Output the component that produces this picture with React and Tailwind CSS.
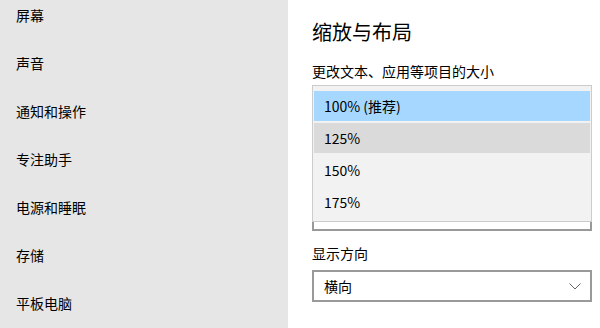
const navItems = ['屏幕', '声音', '通知和操作', '专注助手', '电源和睡眠', '存储', '平板电脑'];
const scaleOptions = ['100% (推荐)', '125%', '150%', '175%'];

function App() {
  return (
    <div
      className="flex w-[600px] h-[328px] overflow-hidden bg-white text-black"
      style={{ fontFamily: '"Noto Sans CJK SC", "Noto Sans", sans-serif' }}
    >
      {/* Sidebar */}
      <nav className="w-[288px] shrink-0 bg-[#e6e6e6]">
        <ul className="-mt-[9px] flex flex-col">
          {navItems.map((item) => (
            <li key={item} className="h-12 flex items-center pl-4 text-[14px] leading-5">
              {item}
            </li>
          ))}
        </ul>
      </nav>

      {/* Content */}
      <main className="flex-1 pl-6 pr-2 pt-[18px]">
        <h1 className="text-[20px] leading-7 font-normal">缩放与布局</h1>
        <p className="mt-[15px] text-[14px] leading-5">更改文本、应用等项目的大小</p>

        <div className="relative mt-[4px] h-[146px] w-[280px] flex flex-col justify-end">
          {/* underlying combobox */}
          <div className="h-8 border-2 border-[#999999]" />

          {/* open dropdown list */}
          <ul className="absolute top-0 left-0 w-full h-[137px] bg-[#f2f2f2] border border-[#cccccc] pt-[5px] px-px flex flex-col gap-[2px]">
            {scaleOptions.map((opt, i) => (
              <li
                key={opt}
                className={`h-[30px] shrink-0 flex items-center px-[10px] text-[14px] leading-5 ${
                  i === 0 ? 'bg-[#a6d8ff]' : i === 1 ? 'bg-[#dadada]' : ''
                }`}
              >
                {opt}
              </li>
            ))}
          </ul>
        </div>

        <p className="mt-[12px] text-[14px] leading-5">显示方向</p>
        <div className="mt-[7px] h-8 w-[280px] border-2 border-[#999999] flex items-center justify-between pl-[10px] pr-[8px] text-[14px] leading-5">
          <span>横向</span>
          <svg width="12" height="7" viewBox="0 0 12 7" fill="none" className="mr-px">
            <path d="M0.5 0.5 L6 6 L11.5 0.5" stroke="#666666" strokeWidth="1" />
          </svg>
        </div>
      </main>
    </div>
  );
}

export default App;
